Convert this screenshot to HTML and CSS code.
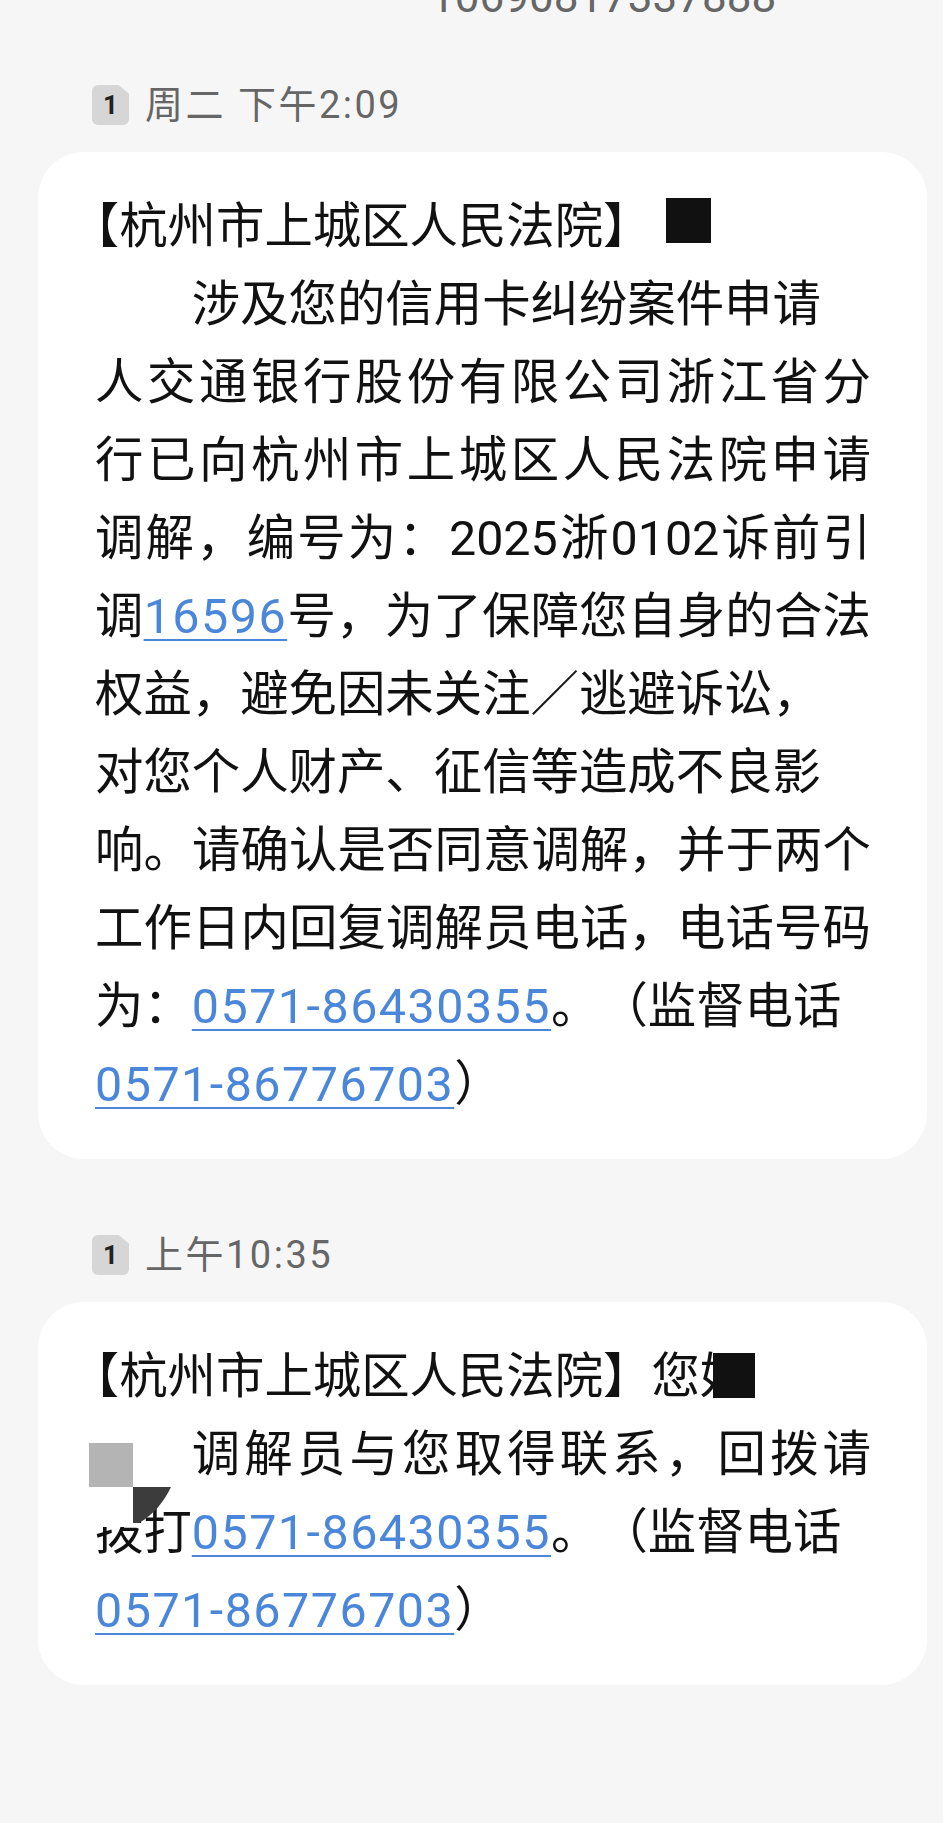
FILE: index.html
```html
<!DOCTYPE html>
<html lang="zh-CN">
<head>
  <title>短信</title>
  <meta charset="UTF-8" />
  <link rel="stylesheet" href="styles.css">
</head>
<body>
  <div class="sender">10690817337888</div>

  <div class="stamp first">
    <span class="sim">1</span>
    <span class="time">周二 下午2:09</span>
  </div>
  <div class="bubble">
    <p class="line"><span class="open">【</span>杭州市上城区人民法院】<span class="redact"></span></p>
    <p class="line indent">涉及您的信用卡纠纷案件申请</p>
    <p class="line just">人交通银行股份有限公司浙江省分</p>
    <p class="line just">行已向杭州市上城区人民法院申请</p>
    <p class="line just">调解，编号为：2025浙0102诉前引</p>
    <p class="line just">调<span class="link">16596</span>号，为了保障您自身的合法</p>
    <p class="line">权益，避免因未关注／逃避诉讼，</p>
    <p class="line">对您个人财产、征信等造成不良影</p>
    <p class="line just">响。请确认是否同意调解，并于两个</p>
    <p class="line just">工作日内回复调解员电话，电话号码</p>
    <p class="line">为：<span class="link">0571-86430355</span>。（监督电话</p>
    <p class="line"><span class="link">0571-86776703</span>）</p>
  </div>

  <div class="stamp">
    <span class="sim">1</span>
    <span class="time">上午10:35</span>
  </div>
  <div class="bubble">
    <p class="line"><span class="open">【</span>杭州市上城区人民法院】您好<span class="redact cover"></span></p>
    <p class="line indent just">调解员与您取得联系，回拨请</p>
    <p class="line">拨打<span class="link">0571-86430355</span>。（监督电话</p>
    <p class="line"><span class="link">0571-86776703</span>）</p>

    <!-- redaction marks left on the screenshot -->
    <span class="mark mark-grey"></span>
    <span class="mark mark-white"></span>
    <svg class="mark mark-dark" width="38" height="36" viewBox="0 0 38 36">
      <path d="M0 0 H38 C31 15 20 28 6 36 H0 Z" fill="#3c3c3c"/>
    </svg>
  </div>
</body>
</html>
```

FILE: styles.css
```css
html {
  background: #f6f6f6;
}
body {
  margin: 0;
  font-family: "Roboto", "Noto Sans CJK SC", sans-serif;
  color: #111;
}
.sender {
  margin: -25px 0 0 430px;
  font-size: 44px;
  line-height: 44px;
  color: #666;
}
.stamp {
  display: flex;
  align-items: center;
  gap: 16px;
  height: 40px;
  margin: 76px 0 27px 92px;
}
.stamp.first {
  margin-top: 66px;
}
.sim {
  display: flex;
  align-items: center;
  justify-content: center;
  width: 37px;
  height: 40px;
  background: #d6d6d6;
  border-radius: 6px;
  clip-path: polygon(0 0, 72% 0, 100% 22%, 100% 100%, 0 100%);
  font-size: 26px;
  font-weight: 700;
  color: #222;
}
.time {
  font-size: 38px;
  line-height: 40px;
  letter-spacing: 2.5px;
  color: #666;
}
.bubble {
  position: relative;
  margin: 0 16px 0 38px;
  padding: 36px 56px 35px 57px;
  background: #fff;
  border-radius: 46px;
}
.line {
  margin: 0;
  font-size: 48.4px;
  line-height: 78px;
  text-spacing-trim: space-all;
}
.open {
  margin-left: -0.5em;
}
.just {
  text-align: justify;
  text-align-last: justify;
}
.indent {
  padding-left: 2em;
}
.link {
  color: #4a86d9;
  text-decoration: underline;
  text-decoration-thickness: 2px;
  text-underline-offset: 6px;
  letter-spacing: 1.5px;
}
.redact {
  display: inline-block;
  width: 45px;
  height: 45px;
  margin-left: 14px;
  background: #111;
}
.redact.cover {
  width: 42px;
  margin-left: -35px;
  vertical-align: -5px;
}
.mark {
  position: absolute;
  display: block;
}
.mark-grey {
  left: 51px;
  top: 141px;
  width: 44px;
  height: 44px;
  background: #b4b4b4;
}
.mark-white {
  left: 51px;
  top: 185px;
  width: 44px;
  height: 40px;
  background: #fff;
}
.mark-dark {
  left: 95px;
  top: 185px;
}
```
